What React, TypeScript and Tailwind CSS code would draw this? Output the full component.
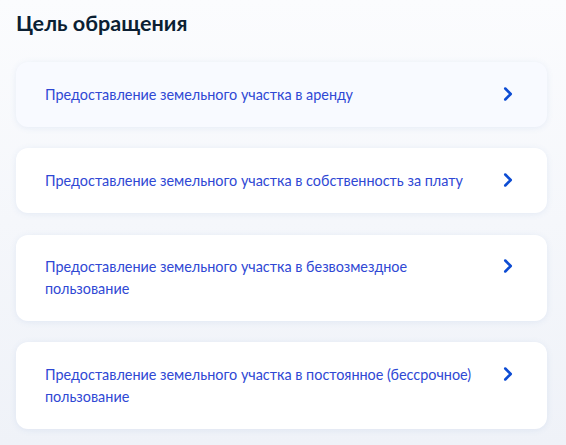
import { ChevronRight } from 'lucide-react';

const options = [
  { title: 'Предоставление земельного участка в аренду', active: true },
  { title: 'Предоставление земельного участка в собственность за плату' },
  { title: 'Предоставление земельного участка в безвозмездное пользование' },
  { title: 'Предоставление земельного участка в постоянное (бессрочное) пользование' },
];

export default function App() {
  return (
    <div
      className="min-h-[445px] w-full bg-gradient-to-b from-[#fbfcfe] to-[#eff2f8] pl-4 pr-[19px] pt-[9px] pb-4"
      style={{ fontFamily: 'Lato, "Noto Sans", sans-serif' }}
    >
      <h1 className="text-[21.6px] leading-[29px] font-bold text-[#0b1f33]">Цель обращения</h1>

      <div className="mt-[24px] flex flex-col gap-[21.5px]">
        {options.map((opt) => (
          <a
            key={opt.title}
            href="#"
            className={`flex items-start justify-between gap-4 rounded-xl pl-[29px] pr-[28px] py-[21.6px] shadow-[0_1px_6px_rgba(102,137,194,0.12)] ${
              opt.active ? 'bg-[#f8faff]' : 'bg-white'
            }`}
          >
            <span className="max-w-[440px] text-[14.4px] leading-[21.6px] text-[#2f48d4]">{opt.title}</span>
            <ChevronRight className="mt-[-1px] h-[22px] w-[22px] shrink-0 text-[#0d4cd3]" strokeWidth={2.8} />
          </a>
        ))}
      </div>
    </div>
  );
}
